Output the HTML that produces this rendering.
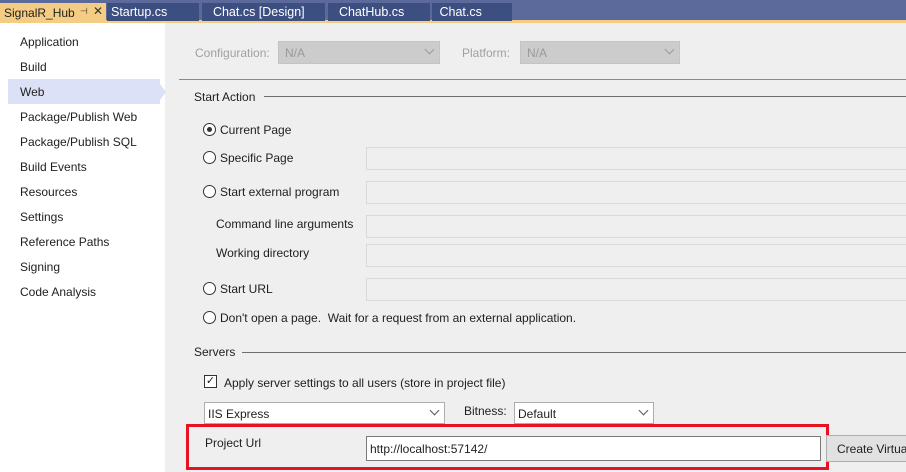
<!DOCTYPE html><html><head><style>
*{margin:0;padding:0;box-sizing:border-box}
html,body{width:906px;height:472px;overflow:hidden}
body{background:#efefef;font-family:"Liberation Sans",sans-serif;font-size:12px;color:#1e1e1e;position:relative}
.a{position:absolute;white-space:nowrap}
.tab{position:absolute;top:3px;height:18px;background:#3c4f80;color:#fff;font-size:12.5px;padding:2px 0 0 4px;white-space:nowrap;overflow:hidden}
.nav{position:absolute;left:20px;font-size:12px}
.tb{position:absolute;left:366px;width:540px;height:23px;border:1px solid #d9d9d9;border-right:none;background:#efefef}
.rad{position:absolute;left:203px;width:13px;height:13px;border:1px solid #333;border-radius:50%;background:#fff}
.sel{position:absolute;border:1px solid #adadad;background:#fff;height:22px}
.chev{position:absolute;right:6px;top:4px;width:7px;height:7px;border-right:1px solid #555;border-bottom:1px solid #555;transform:rotate(45deg)}
</style></head><body>
<div class="a" style="left:0;top:0;width:906px;height:21px;background:#5b6a9b"></div>
<div class="a" style="left:0;top:20px;width:906px;height:3px;background:#f5cc84"></div>
<div class="tab" style="left:0;width:106px;height:20px;background:#f5cc84;color:#1e1e1e;padding-top:3px;font-size:12px">SignalR_Hub</div>
<div class="a" style="left:80px;top:6px;font-size:9px;color:#333">⊣</div>
<div class="a" style="left:93px;top:4px;font-size:12px;color:#333">✕</div>
<div class="tab" style="left:107px;width:92px">Startup.cs</div>
<div class="tab" style="left:202px;width:123px">&nbsp;&nbsp;Chat.cs [Design]</div>
<div class="tab" style="left:328px;width:102px">&nbsp;&nbsp;ChatHub.cs</div>
<div class="tab" style="left:432px;width:80px">&nbsp;Chat.cs</div>
<div class="a" style="left:0;top:23px;width:165px;height:449px;background:#fff"></div>
<div class="a" style="left:8px;top:79px;width:152px;height:25px;background:#dce1f7"></div>
<div class="a" style="left:160px;top:84px;width:0;height:0;border-top:8px solid transparent;border-bottom:8px solid transparent;border-left:6px solid #dce1f7"></div>
<div class="nav" style="top:35px">Application</div>
<div class="nav" style="top:60px">Build</div>
<div class="nav" style="top:85px">Web</div>
<div class="nav" style="top:110px">Package/Publish Web</div>
<div class="nav" style="top:135px">Package/Publish SQL</div>
<div class="nav" style="top:160px">Build Events</div>
<div class="nav" style="top:185px">Resources</div>
<div class="nav" style="top:210px">Settings</div>
<div class="nav" style="top:235px">Reference Paths</div>
<div class="nav" style="top:260px">Signing</div>
<div class="nav" style="top:285px">Code Analysis</div>

<div class="a" style="left:195px;top:46px;color:#a0a0a0">Configuration:</div>
<div class="a" style="left:278px;top:41px;width:162px;height:23px;background:#cccccc;border:1px solid #c4c4c4;color:#999;padding:4px 6px">N/A<div class="chev" style="border-color:#999"></div></div>
<div class="a" style="left:462px;top:46px;color:#a0a0a0">Platform:</div>
<div class="a" style="left:520px;top:41px;width:160px;height:23px;background:#cccccc;border:1px solid #c4c4c4;color:#999;padding:4px 6px">N/A<div class="chev" style="border-color:#999"></div></div>
<div class="a" style="left:179px;top:79px;width:727px;height:1px;background:#8a8a8a"></div>
<div class="a" style="left:194px;top:90px">Start Action</div>
<div class="a" style="left:264px;top:96px;width:642px;height:1px;background:#6e6e6e"></div>

<div class="rad" style="top:123px"><div style="position:absolute;left:3px;top:3px;width:5px;height:5px;border-radius:50%;background:#333"></div></div>
<div class="a" style="left:220px;top:123px">Current Page</div>
<div class="rad" style="top:151px"></div><div class="a" style="left:220px;top:151px">Specific Page</div>
<div class="rad" style="top:185px"></div><div class="a" style="left:220px;top:185px">Start external program</div>
<div class="a" style="left:216px;top:217px">Command line arguments</div>
<div class="a" style="left:216px;top:246px">Working directory</div>
<div class="rad" style="top:282px"></div><div class="a" style="left:220px;top:282px">Start URL</div>
<div class="rad" style="top:311px"></div><div class="a" style="left:220px;top:311px">Don't open a page.&nbsp; Wait for a request from an external application.</div>
<div class="tb" style="top:147px"></div><div class="tb" style="top:181px"></div><div class="tb" style="top:215px"></div><div class="tb" style="top:244px"></div><div class="tb" style="top:278px"></div>

<div class="a" style="left:194px;top:345px">Servers</div>
<div class="a" style="left:242px;top:352px;width:664px;height:1px;background:#6e6e6e"></div>
<div class="a" style="left:204px;top:375px;width:13px;height:13px;border:1px solid #333;background:#fff;font-size:11px;line-height:11px;text-align:center">✓</div>
<div class="a" style="left:224px;top:376px">Apply server settings to all users (store in project file)</div>
<div class="sel" style="left:204px;top:402px;width:241px;padding:4px 3px">IIS Express<div class="chev"></div></div>
<div class="a" style="left:464px;top:404px">Bitness:</div>
<div class="sel" style="left:514px;top:402px;width:140px;padding:4px 3px">Default<div class="chev"></div></div>
<div class="a" style="left:186px;top:424px;width:643px;height:46px;border:3px solid #e81123"></div>
<div class="a" style="left:205px;top:436px">Project Url</div>
<div class="a" style="left:366px;top:436px;width:455px;height:25px;border:1px solid #7a7a7a;background:#fff;padding:5px 3px">http://localhost:57142/</div>
<div class="a" style="left:826px;top:435px;width:80px;height:27px;border:1px solid #adadad;border-right:none;background:#e1e1e1;padding:6px 10px;overflow:hidden">Create Virtual Directory</div>
</body></html>
